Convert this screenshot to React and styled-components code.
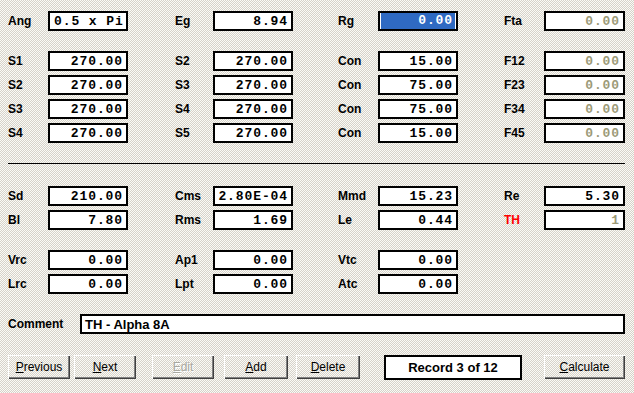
import React from 'react';
import styled, { createGlobalStyle } from 'styled-components';

const GlobalStyle = createGlobalStyle`
  html, body {
    margin: 0;
    padding: 0;
  }
  body {
    width: 634px;
    height: 393px;
    overflow: hidden;
    background: repeating-conic-gradient(#d6d2ca 0 25%, #fbfbf6 0 50%) 0 0 / 2px 2px;
    font-family: 'Liberation Sans', Arial, sans-serif;
  }
`;

const Page = styled.div`
  display: flex;
  flex-direction: column;
  padding: 11px 9px 0 8px;
`;

const Group = styled.div`
  display: flex;
  flex-direction: column;
  gap: 4px;
  margin-bottom: 20px;
`;

const Row = styled.div`
  display: grid;
  grid-template-columns: 167px 163px 166px 121px;
  height: 20px;
`;

const Field = styled.div`
  display: flex;
  align-items: center;
`;

const Label = styled.span`
  flex: 0 0 ${p => p.$w || 40}px;
  font-size: 12px;
  font-weight: bold;
  color: ${p => (p.$red ? '#ff0000' : '#000')};
`;

const Box = styled.div`
  box-sizing: border-box;
  width: ${p => p.$w || 80}px;
  height: 20px;
  border: 1px solid #000;
  outline: 1px solid #000;
  outline-offset: -2px;
  background: #fff;
  display: flex;
  align-items: center;
  justify-content: ${p => (p.$left ? 'flex-start' : 'flex-end')};
  padding: 0 4px 0 5px;
  font-family: 'Liberation Mono', 'Courier New', monospace;
  font-weight: bold;
  font-size: 13px;
  letter-spacing: 0.9px;
  color: ${p => (p.$dim ? '#9c9a78' : '#000')};
  white-space: pre;
`;

const Selected = styled.span`
  flex: 1;
  align-self: stretch;
  margin: 1px -2px 1px -3px;
  background: #2f6ac2;
  color: #fff;
  text-align: right;
  line-height: 16px;
  padding-right: 2px;
`;

const Divider = styled.div`
  height: 1px;
  background: #000;
  margin: 0 0 22px;
`;

const CommentRow = styled.div`
  display: flex;
  align-items: center;
  height: 20px;
  margin-bottom: 21px;
`;

const CommentBox = styled(Box)`
  flex: 1;
  font-family: 'Liberation Sans', Arial, sans-serif;
  font-size: 13px;
  letter-spacing: 0;
  padding-left: 4px;
`;

const ButtonBar = styled.div`
  display: flex;
  align-items: center;
  height: 24px;
`;

const Button = styled.button`
  box-sizing: border-box;
  width: ${p => p.$w || 62}px;
  height: 24px;
  margin-left: ${p => p.$ml || 0}px;
  padding: 0;
  background: transparent;
  border: none;
  box-shadow: inset 1px 1px 0 #fff, inset -1px -1px 0 #404040, inset -2px -2px 0 #808080;
  font-family: 'Liberation Sans', Arial, sans-serif;
  font-size: 12px;
  color: ${p => (p.disabled ? '#a8a8a0' : '#000')};
  text-shadow: ${p => (p.disabled ? '1px 1px 0 #fff' : 'none')};

  u {
    text-decoration: underline;
    text-underline-offset: 1px;
  }
`;

const RecordBox = styled.div`
  box-sizing: border-box;
  width: 138px;
  height: 25px;
  margin-left: 24px;
  border: 2px solid #000;
  background: #fff;
  display: flex;
  align-items: center;
  justify-content: center;
  font-size: 13px;
  font-weight: bold;
`;

const Spacer = styled.div`
  flex: 1;
`;

const top = [
  [['Ang', '0.5 x Pi', 'left'], ['Eg', '8.94'], ['Rg', '0.00', 'sel'], ['Fta', '0.00', 'dim']],
];

const sRows = [
  [['S1', '270.00'], ['S2', '270.00'], ['Con', '15.00'], ['F12', '0.00', 'dim']],
  [['S2', '270.00'], ['S3', '270.00'], ['Con', '75.00'], ['F23', '0.00', 'dim']],
  [['S3', '270.00'], ['S4', '270.00'], ['Con', '75.00'], ['F34', '0.00', 'dim']],
  [['S4', '270.00'], ['S5', '270.00'], ['Con', '15.00'], ['F45', '0.00', 'dim']],
];

const dRows = [
  [['Sd', '210.00'], ['Cms', '2.80E-04'], ['Mmd', '15.23'], ['Re', '5.30']],
  [['Bl', '7.80'], ['Rms', '1.69'], ['Le', '0.44'], ['TH', '1', 'dimred']],
];

const vRows = [
  [['Vrc', '0.00'], ['Ap1', '0.00'], ['Vtc', '0.00']],
  [['Lrc', '0.00'], ['Lpt', '0.00'], ['Atc', '0.00']],
];

function Cell({ label, value, kind, col }) {
  return (
    <Field>
      <Label $w={col === 1 ? 38 : 40} $red={kind === 'dimred'}>{label}</Label>
      <Box
        $w={col === 3 ? 81 : 80}
        $left={kind === 'left'}
        $dim={kind === 'dim' || kind === 'dimred'}
      >
        {kind === 'sel' ? <Selected>{value}</Selected> : value}
      </Box>
    </Field>
  );
}

function Rows({ rows }) {
  return (
    <Group>
      {rows.map((r, i) => (
        <Row key={i}>
          {r.map(([l, v, k], j) => (
            <Cell key={j} col={j} label={l} value={v} kind={k} />
          ))}
        </Row>
      ))}
    </Group>
  );
}

export default function App() {
  return (
    <>
      <GlobalStyle />
      <Page>
        <Rows rows={top} />
        <Rows rows={sRows} />
        <Divider />
        <Rows rows={dRows} />
        <Rows rows={vRows} />
        <CommentRow>
          <Label $w={72}>Comment</Label>
          <CommentBox $left>TH - Alpha 8A</CommentBox>
        </CommentRow>
        <ButtonBar>
          <Button><u>P</u>revious</Button>
          <Button $ml={4}><u>N</u>ext</Button>
          <Button $ml={16} disabled><u>E</u>dit</Button>
          <Button $ml={10} $w={64}><u>A</u>dd</Button>
          <Button $ml={8} $w={64}><u>D</u>elete</Button>
          <RecordBox>Record 3 of 12</RecordBox>
          <Spacer />
          <Button $w={81}><u>C</u>alculate</Button>
        </ButtonBar>
      </Page>
    </>
  );
}
